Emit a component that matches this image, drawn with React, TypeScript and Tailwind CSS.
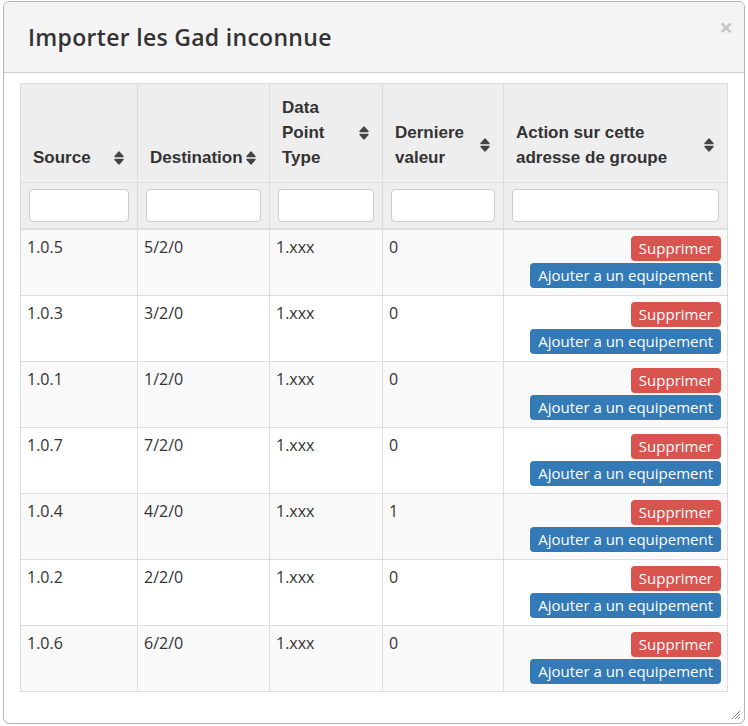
import React from "react";

const rows = [
  { src: "1.0.5", dest: "5/2/0", dpt: "1.xxx", val: "0" },
  { src: "1.0.3", dest: "3/2/0", dpt: "1.xxx", val: "0" },
  { src: "1.0.1", dest: "1/2/0", dpt: "1.xxx", val: "0" },
  { src: "1.0.7", dest: "7/2/0", dpt: "1.xxx", val: "0" },
  { src: "1.0.4", dest: "4/2/0", dpt: "1.xxx", val: "1" },
  { src: "1.0.2", dest: "2/2/0", dpt: "1.xxx", val: "0" },
  { src: "1.0.6", dest: "6/2/0", dpt: "1.xxx", val: "0" },
];

const headers = [
  "Source",
  "Destination",
  "Data Point Type",
  "Derniere valeur",
  "Action sur cette adresse de groupe",
];

function SortIcon() {
  return (
    <svg width="10" height="16" viewBox="0 0 10 16" className="text-[#444]">
      <path d="M1 6.5 L5 2 L9 6.5 Z" fill="currentColor" stroke="currentColor" strokeWidth="1.4" strokeLinejoin="round" />
      <path d="M1 9.5 L5 14 L9 9.5 Z" fill="currentColor" stroke="currentColor" strokeWidth="1.4" strokeLinejoin="round" />
    </svg>
  );
}

export default function App() {
  return (
    <div className="w-[748px] h-[726px] bg-white pt-[1px] px-[3px] font-['Open_Sans',sans-serif] text-[#333]">
      <div className="relative h-[723px] border border-[#b5b5b5] rounded-md bg-white overflow-hidden">
        <div className="relative h-[71px] bg-[#f4f4f4] border-b border-[#cfcfcf] flex items-center pl-[24px]">
          <h1 className="text-[23px] font-semibold text-[#333] tracking-[0.3px]">Importer les Gad inconnue</h1>
          <span className="absolute right-[11px] top-[13px] text-[24px] font-bold leading-none text-[#c8c8c8]">×</span>
        </div>

        <div className="pl-[16px] pt-[10px]">
          <table className="table-fixed border-collapse w-[707px] border border-[#ddd]">
            <colgroup>
              <col className="w-[117px]" />
              <col className="w-[132px]" />
              <col className="w-[113px]" />
              <col className="w-[121px]" />
              <col className="w-[224px]" />
            </colgroup>
            <thead className="bg-[#eeeeee]">
              <tr>
                {headers.map((h) => (
                  <th
                    key={h}
                    className="border border-[#ddd] align-bottom text-left pl-[12px] pr-[30px] pt-[11px] pb-[12px] font-['Liberation_Sans',Arial,sans-serif] font-bold text-[17px] leading-[25px] text-[#333]"
                  >
                    <div className="relative">
                      {h}
                      <span className="absolute -right-[17px] top-1/2 -translate-y-1/2 flex">
                        <SortIcon />
                      </span>
                    </div>
                  </th>
                ))}
              </tr>
              <tr>
                {headers.map((h) => (
                  <th key={h} className="border border-[#ddd] border-b-2 px-[8px] py-[6px]">
                    <input
                      type="text"
                      className="block w-full h-[33px] bg-white border border-[#ccc] rounded-[4px] outline-none"
                    />
                  </th>
                ))}
              </tr>
            </thead>
            <tbody>
              {rows.map((r, i) => (
                <tr key={r.src} className={i % 2 === 0 ? "bg-[#f9f9f9]" : "bg-white"}>
                  <td className="border border-[#ddd] align-top p-[6px] text-[16px] leading-[22px] h-[66px]">{r.src}</td>
                  <td className="border border-[#ddd] align-top p-[6px] text-[16px] leading-[22px]">{r.dest}</td>
                  <td className="border border-[#ddd] align-top p-[6px] text-[16px] leading-[22px]">{r.dpt}</td>
                  <td className="border border-[#ddd] align-top p-[6px] text-[16px] leading-[22px]">{r.val}</td>
                  <td className="border border-[#ddd] align-top p-[6px]">
                    <div className="flex flex-col items-end gap-[2px]">
                      <button className="bg-[#d9534f] text-white text-[15px] leading-[21px] px-[8px] py-[2px] rounded-[4px]">
                        Supprimer
                      </button>
                      <button className="bg-[#337ab7] text-white text-[15px] leading-[21px] px-[8px] py-[2px] rounded-[4px]">
                        Ajouter a un equipement
                      </button>
                    </div>
                  </td>
                </tr>
              ))}
            </tbody>
          </table>
        </div>

        <svg width="10" height="10" viewBox="0 0 10 10" className="absolute right-[3px] bottom-[3px]">
          <path d="M9 1 L1 9 M9 4 L4 9 M9 7 L7 9" stroke="#888" strokeWidth="1" />
        </svg>
      </div>
    </div>
  );
}
